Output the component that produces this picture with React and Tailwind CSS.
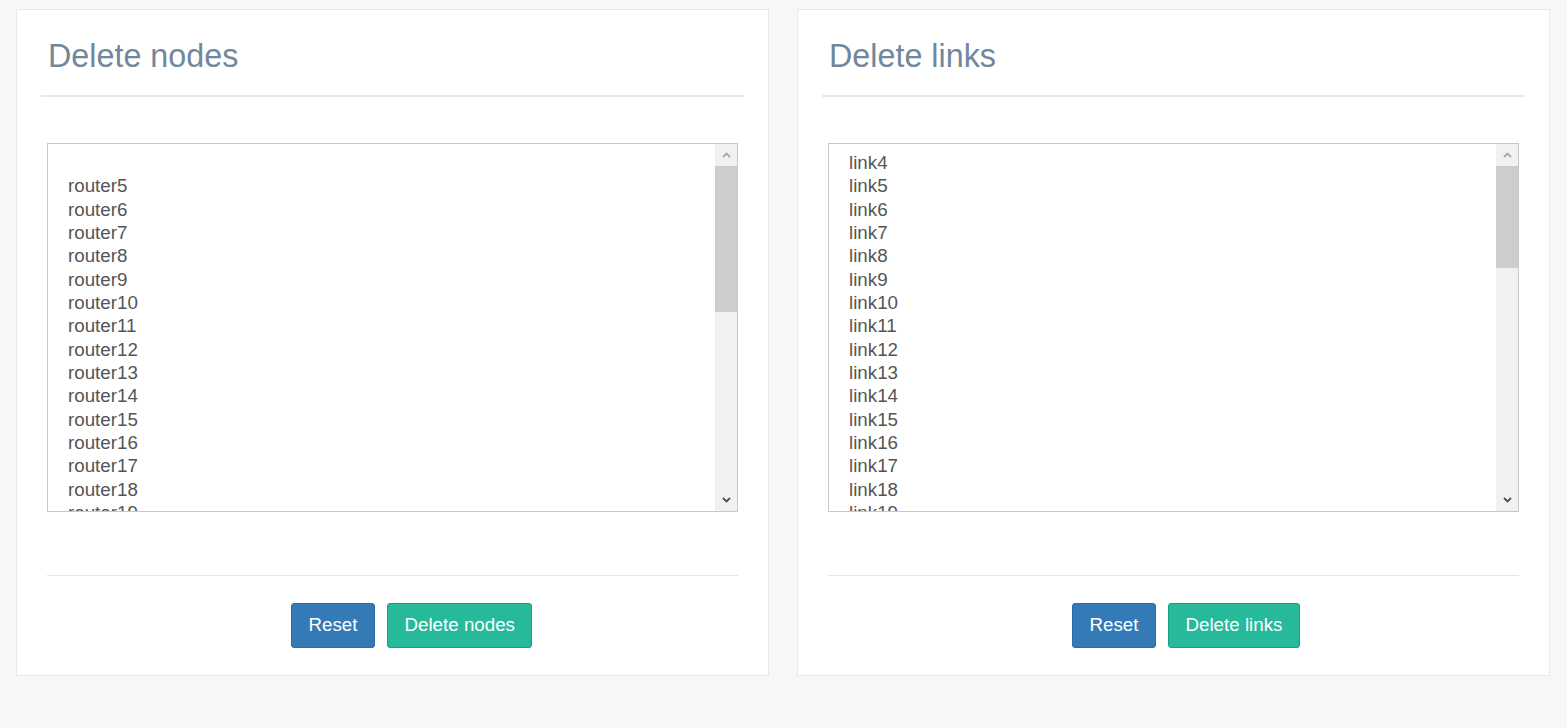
import React from "react";

const routers = ["", ...Array.from({ length: 15 }, (_, i) => `router${i + 5}`)];
const links = Array.from({ length: 16 }, (_, i) => `link${i + 4}`);

const Chevron = ({ down, dark }) => (
    <svg width="9" height="6" viewBox="0 0 9 6" className={dark ? "text-[#505050]" : "text-[#a8a8a8]"}>
        <path
            d={down ? "M1 1 L4.5 4.5 L8 1" : "M1 5 L4.5 1.5 L8 5"}
            fill="none"
            stroke="currentColor"
            strokeWidth="1.8"
        />
    </svg>
);

const ListBox = ({ items, thumb }) => (
    <div className="flex h-[369px] border border-[#c8c8c8] bg-white">
        <div className="flex-1 overflow-hidden pt-[7px] pl-[20px] text-[18.75px] text-[#555]">
            {items.map((item, idx) => (
                <div key={idx} className="h-[23.35px] leading-[23.35px]">
                    {item}
                </div>
            ))}
        </div>
        <div className="flex w-[22px] flex-col bg-[#f1f1f1]">
            <div className="flex h-[22px] items-center justify-center">
                <Chevron />
            </div>
            <div className="flex-1">
                <div className="bg-[#cdcdcd]" style={{ height: thumb }}></div>
            </div>
            <div className="flex h-[22px] items-center justify-center">
                <Chevron down dark />
            </div>
        </div>
    </div>
);

const Panel = ({ title, items, thumb, action }) => (
    <div className="flex h-[667px] flex-col border border-[#e6e9ed] bg-white px-[24px]">
        <h2 className="mt-[28px] pl-[7px] text-[32.3px] leading-[36px] text-[#73879c]">{title}</h2>
        <div className="mt-[21px] h-[2px] bg-[#e6e9ed]"></div>
        <div className="px-[6px]">
            <div className="mt-[46px]">
                <ListBox items={items} thumb={thumb} />
            </div>
            <div className="mt-[63px] h-px bg-[#e5e5e5]"></div>
            <div className="mt-[27px] flex gap-[12px] pl-[244px]">
                <button className="h-[45px] rounded-[3px] border border-[#2e6da4] bg-[#337ab7] px-[16.5px] text-[18.75px] text-white">
                    Reset
                </button>
                <button className="h-[45px] rounded-[3px] border border-[#169f85] bg-[#26b99a] px-[16.5px] text-[18.75px] text-white">
                    {action}
                </button>
            </div>
        </div>
    </div>
);

export default function App() {
    return (
        <div className="min-h-[728px] bg-[#f7f7f7] pt-[9px] pl-[16px] pr-[17px] font-['Liberation_Sans',Arial,sans-serif]">
            <div className="grid grid-cols-2 gap-[28px]">
                <Panel title="Delete nodes" items={routers} thumb={146} action="Delete nodes" />
                <Panel title="Delete links" items={links} thumb={102} action="Delete links" />
            </div>
        </div>
    );
}
